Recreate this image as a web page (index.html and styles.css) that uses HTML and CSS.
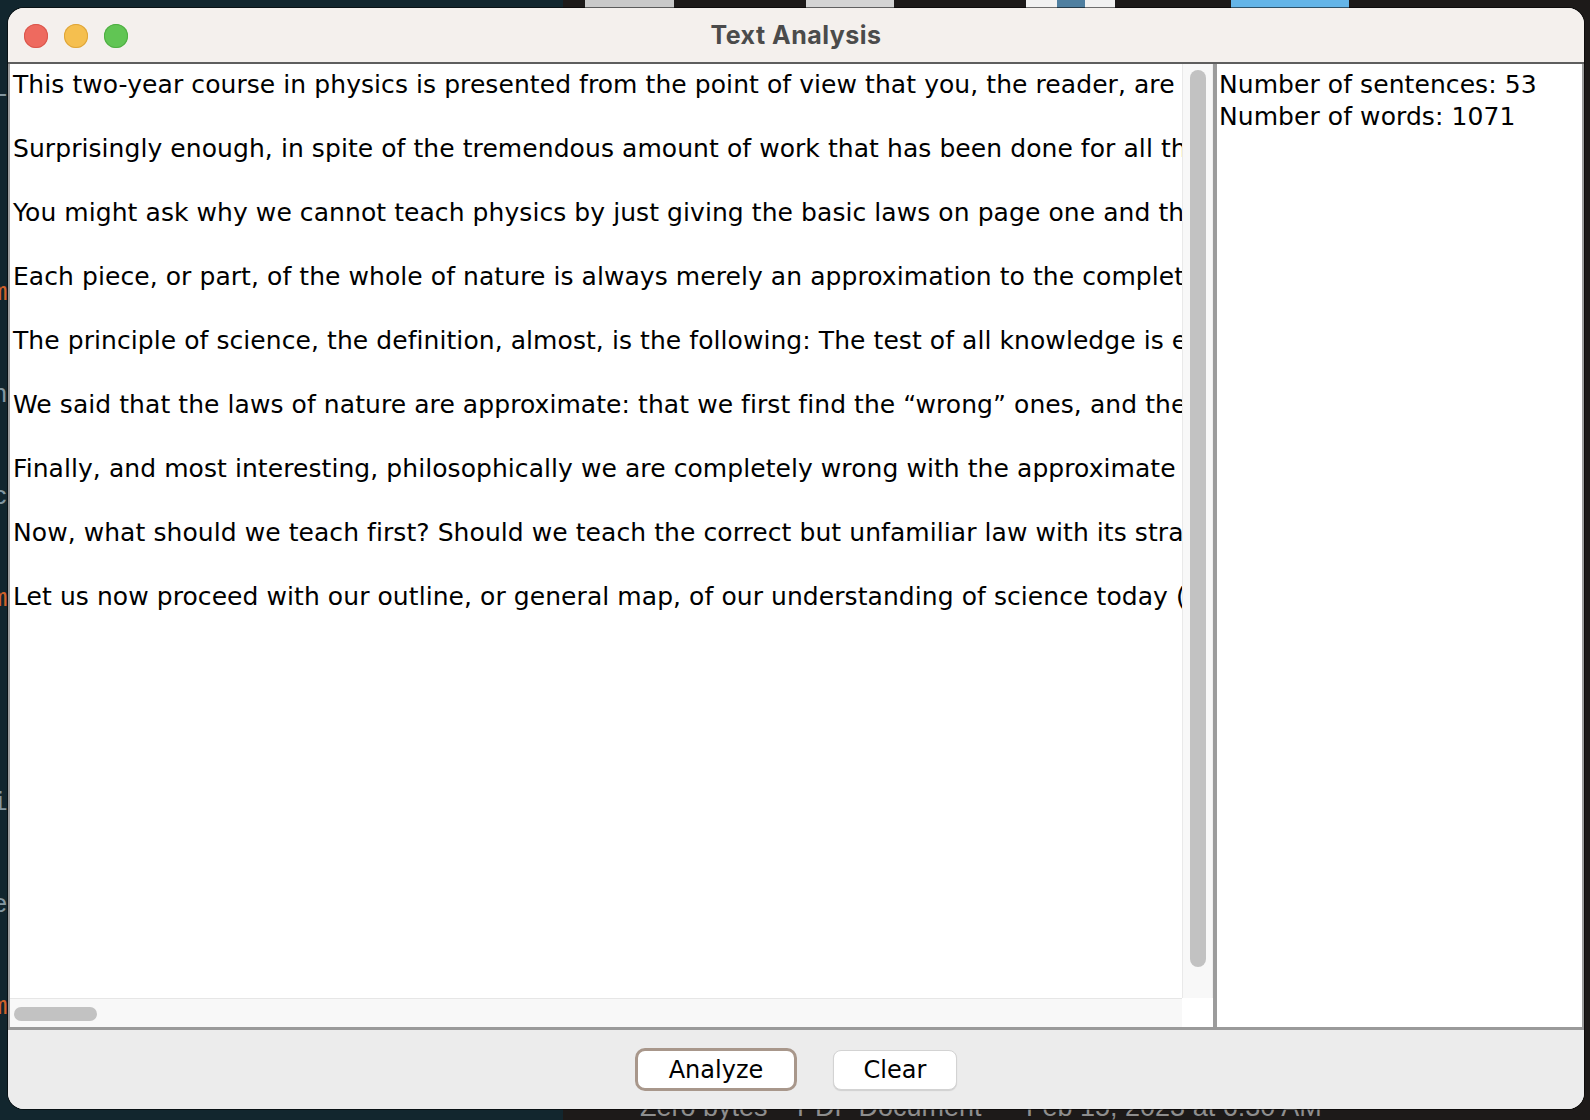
FILE: index.html
```html
<!DOCTYPE html>
<html lang="en">
<head>
<meta charset="utf-8">
<title>Text Analysis</title>
<link rel="stylesheet" href="styles.css">
</head>
<body>
<div class="desktop">
  <div class="code">
    <div class="cl">L</div>
    <div class="cl"> </div>
    <div class="cl kw">m</div>
    <div class="cl">n</div>
    <div class="cl">c</div>
    <div class="cl kw">m</div>
    <div class="cl"> </div>
    <div class="cl">i</div>
    <div class="cl">e</div>
    <div class="cl kw">m</div>
    <div class="cl"> </div>
    <div class="cl"> </div>
    <div class="cl"> </div>
    <div class="cl">1</div>
    <div class="cl">a</div>
    <div class="cl">m</div>
    <div class="cl">1</div>
    <div class="cl"> </div>
    <div class="cl"> </div>
    <div class="cl kw">m</div>
    <div class="cl">n</div>
    <div class="cl">-</div>
    <div class="cl"> </div>
    <div class="cl kw">m</div>
    <div class="cl"> </div>
    <div class="cl"> </div>
    <div class="cl">e</div>
    <div class="cl">e</div>
    <div class="cl">e</div>
    <div class="cl kw">m</div>
  </div>
  <div class="dock-thumb thumb-a"></div>
  <div class="dock-thumb thumb-b"></div>
  <div class="dock-thumb thumb-c"><span class="thumb-c-blue"></span></div>
  <div class="dock-thumb thumb-d"></div>
  <div class="finder-row"><span class="fr-size">Zero bytes</span><span class="fr-kind">PDF Document</span><span class="fr-date">Feb 15, 2023 at 6:30 AM</span></div>
</div>

<div class="window">
  <div class="titlebar">
    <div class="lights">
      <span class="light red"></span>
      <span class="light yellow"></span>
      <span class="light green"></span>
    </div>
    <div class="title">Text Analysis</div>
  </div>

  <div class="content">
    <div class="scrollpane">
      <div class="viewport">
        <div class="para">This two-year course in physics is presented from the point of view that you, the reader, are going to be a physicist.</div>
        <div class="para">Surprisingly enough, in spite of the tremendous amount of work that has been done for all this time it is possible to condense the enormous mass of results.</div>
        <div class="para">You might ask why we cannot teach physics by just giving the basic laws on page one and then showing how they work in all possible circumstances.</div>
        <div class="para">Each piece, or part, of the whole of nature is always merely an approximation to the complete truth, or the complete truth so far as we know it.</div>
        <div class="para">The principle of science, the definition, almost, is the following: The test of all knowledge is experiment.</div>
        <div class="para">We said that the laws of nature are approximate: that we first find the “wrong” ones, and then we find the “right” ones.</div>
        <div class="para">Finally, and most interesting, philosophically we are completely wrong with the approximate law.</div>
        <div class="para">Now, what should we teach first? Should we teach the correct but unfamiliar law with its strange and difficult conceptual ideas?</div>
        <div class="para">Let us now proceed with our outline, or general map, of our understanding of science today (in particular, physics, but also of other sciences).</div>
      </div>
      <div class="vscroll"><div class="vthumb"></div></div>
      <div class="hscroll"><div class="hthumb"></div></div>
      <div class="corner"></div>
    </div>
    <div class="results">
      <div class="res-line">Number of sentences: 53</div>
      <div class="res-line">Number of words: 1071</div>
    </div>
  </div>

  <div class="buttonbar">
    <button class="btn btn-default">Analyze</button>
    <button class="btn">Clear</button>
  </div>
</div>
</body>
</html>
```

FILE: styles.css
```css
* { box-sizing: border-box; }

html, body {
  margin: 0;
  padding: 0;
}

body {
  width: 1590px;
  height: 1120px;
  overflow: hidden;
  position: relative;
  background: linear-gradient(to right, #12262e 0, #12262e 563px, #1d1a19 563px, #1d1a19 100%);
  font-family: "DejaVu Sans", "Liberation Sans", sans-serif;
}

/* ---------- desktop behind the window ---------- */
.desktop {
  position: absolute;
  inset: 0;
  overflow: hidden;
}

.code {
  position: absolute;
  left: -8px;
  top: 4px;
  font-family: "Liberation Mono", monospace;
  font-size: 26px;
  line-height: 34px;
  color: #8397a0;
  white-space: pre;
}
.code .kw { color: #d0622a; }

.dock-thumb {
  position: absolute;
  top: 0;
  height: 9px;
}
.thumb-a { left: 585px; width: 89px; background: #c9c9c9; }
.thumb-b { left: 806px; width: 88px; background: #d4d4d4; }
.thumb-c { left: 1026px; width: 89px; background: #f1f1f1; }
.thumb-c-blue {
  position: absolute;
  left: 31px;
  top: 0;
  width: 28px;
  height: 9px;
  background: #4f7fa0;
}
.thumb-d { left: 1231px; width: 118px; background: #64b5e8; }

.finder-row {
  position: absolute;
  top: 1095px;
  left: 640px;
  font-family: "Liberation Sans", Arial, sans-serif;
  font-size: 27px;
  line-height: 25px;
  height: 25px;
  color: #8e8e8e;
  white-space: nowrap;
}
.fr-size { display: inline-block; width: 157px; }
.fr-kind { display: inline-block; width: 229px; }

/* ---------- window ---------- */
.window {
  position: absolute;
  left: 8px;
  top: 8px;
  width: 1576px;
  height: 1101px;
  border-radius: 16px;
  overflow: hidden;
  display: flex;
  flex-direction: column;
  background: #ececec;
  box-shadow: 0 0 0 1px rgba(0, 0, 0, 0.55);
}

.titlebar {
  position: relative;
  height: 56px;
  flex: 0 0 56px;
  background: #f4f0ed;
  border-bottom: 2px solid #5e5e5e;
  display: flex;
  align-items: center;
  justify-content: center;
}

.lights {
  position: absolute;
  left: 16px;
  top: 16px;
  display: flex;
  gap: 16px;
}

.light {
  width: 24px;
  height: 24px;
  border-radius: 50%;
  display: block;
}
.red { background: #ee6a5f; box-shadow: inset 0 0 0 1px #d9574d; }
.yellow { background: #f5bf4f; box-shadow: inset 0 0 0 1px #dea53a; }
.green { background: #61c554; box-shadow: inset 0 0 0 1px #4fae43; }

.title {
  font-family: Inter, "Liberation Sans", sans-serif;
  font-weight: 700;
  font-size: 25px;
  letter-spacing: 0.5px;
  color: #4b4b4b;
  margin-top: -1px;
}

/* ---------- content ---------- */
.content {
  flex: 0 0 966px;
  height: 966px;
  display: flex;
  border-bottom: 3px solid #9a9a9a;
}

.scrollpane {
  width: 1205px;
  flex: 0 0 1205px;
  border-left: 2px solid #9c9c9c;
  display: grid;
  grid-template-columns: 1172px 31px;
  grid-template-rows: 934px 29px;
  background: #ffffff;
}

.viewport {
  overflow: hidden;
  background: #ffffff;
  padding: 5px 0 0 3px;
  font-size: 25px;
  line-height: 32px;
  letter-spacing: 0.07px;
  color: #000;
}

.para {
  white-space: pre;
  margin-bottom: 32px;
}

.vscroll {
  background: #f8f8f8;
  border-left: 1px solid #e9e9e9;
  border-right: 1px solid #efefef;
  padding: 6px 0 0 7px;
}

.vthumb {
  width: 16px;
  height: 897px;
  border-radius: 8px;
  background: #c2c2c2;
}

.hscroll {
  background: #f8f8f8;
  border-top: 1px solid #e6e6e6;
  padding: 8px 0 0 4px;
}

.hthumb {
  width: 83px;
  height: 14px;
  border-radius: 7px;
  background: #c2c2c2;
}

.corner {
  background: #ffffff;
}

.results {
  flex: 1;
  background: #ffffff;
  border-left: 4px solid #9c9c9c;
  border-right: 2px solid #9c9c9c;
  padding: 5px 0 0 2px;
  font-size: 25px;
  line-height: 32px;
  letter-spacing: 0.07px;
  color: #000;
}

/* ---------- buttons ---------- */
.buttonbar {
  flex: 1;
  background: #ececec;
  display: flex;
  align-items: center;
  justify-content: center;
  gap: 36px;
}

.btn {
  font-family: "DejaVu Sans", "Liberation Sans", sans-serif;
  font-size: 24px;
  color: #000;
  background: #ffffff;
  border: 1px solid #d3d3d3;
  border-radius: 8px;
  width: 124px;
  height: 40px;
  padding: 0;
  box-shadow: 0 1px 1px rgba(0, 0, 0, 0.12);
  line-height: 1;
}

.btn-default {
  width: 162px;
  height: 43px;
  border: 3px solid #a8978b;
  border-radius: 10px;
  box-shadow: none;
}
```
